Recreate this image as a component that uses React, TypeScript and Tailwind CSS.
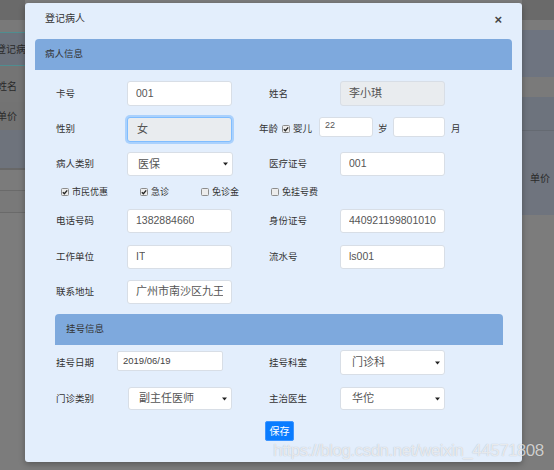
import React from "react";

const FONT = { fontFamily: '"Liberation Sans", "Noto Sans CJK SC", sans-serif' };

function Arrow() {
  return (
    <svg width="5" height="4" viewBox="0 0 5 4" className="shrink-0">
      <polygon points="0,0.5 5,0.5 2.5,3.5" fill="#222" />
    </svg>
  );
}

function Check({ checked }: { checked?: boolean }) {
  return (
    <svg width="8" height="8" viewBox="0 0 8 8" className="shrink-0">
      <rect x="0.5" y="0.5" width="7" height="7" rx="1" fill="#ececec" stroke="#8c8c8c" />
      {checked && <path d="M1.8 4.2 L3.4 5.7 L6.2 2.3" fill="none" stroke="#222" strokeWidth="1.3" />}
    </svg>
  );
}

function Label({ children, w = "w-[71px]" }: { children: React.ReactNode; w?: string }) {
  return <div className={`${w} shrink-0 text-[9.5px] leading-[12px] text-[#333]`}>{children}</div>;
}

function Input({ value, disabled, w = "w-[105px]", h = "h-[25px]", fs = "text-[10.5px]" }: { value: string; disabled?: boolean; w?: string; h?: string; fs?: string }) {
  return (
    <div
      className={`${w} ${h} ${fs} shrink-0 overflow-hidden whitespace-nowrap rounded-[3px] border border-[#d8dee6] px-[8px] flex items-center text-[#555] ${
        disabled ? "bg-[#e9ecef]" : "bg-white"
      }`}
    >
      <span className="overflow-hidden whitespace-nowrap">{value}</span>
    </div>
  );
}

function Select({ value, w = "w-[105px]", h = "h-[25px]", pl = "pl-[10px]" }: { value: string; w?: string; h?: string; pl?: string }) {
  return (
    <div
      className={`${w} ${h} ${pl} shrink-0 rounded-[3px] border border-[#d8dee6] bg-white pr-[4px] flex items-center justify-between text-[11px] text-[#555]`}
    >
      <span>{value}</span>
      <Arrow />
    </div>
  );
}

export default function App() {
  return (
    <div className="relative w-[554px] h-[470px] overflow-hidden bg-[#7c7c7c]" style={FONT}>
      {/* backdrop page */}
      <div className="absolute inset-0 flex">
        <div className="w-[25px] flex flex-col overflow-hidden">
          <div className="h-[20px] bg-[#6a6a6a]" />
          <div className="h-[12px] bg-[#797979]" />
          <div className="h-[34px] bg-[#6c727c] border-y border-[#4f8d90] flex items-center">
            <span className="ml-[-4px] whitespace-nowrap text-[10px] text-[#2a2a2a]">登记病人</span>
          </div>
          <div className="h-[36px] bg-[#747474] flex items-end pb-[9px]">
            <span className="ml-[-3px] whitespace-nowrap text-[10px] leading-[12px] text-[#2a2a2a]">姓名</span>
          </div>
          <div className="h-[28px] bg-[#737373] pt-[9px]">
            <span className="ml-[-3px] block whitespace-nowrap text-[10px] leading-[12px] text-[#2a2a2a]">单价</span>
          </div>
          <div className="h-[38px] bg-[#6e737c]" />
          <div className="h-[2px] bg-[#686868]" />
          <div className="h-[20px] bg-[#7b7b7b]" />
          <div className="h-[1px] bg-[#6a6a6a]" />
          <div className="h-[21px] bg-[#797979]" />
          <div className="h-[1px] bg-[#6a6a6a]" />
          <div className="flex-1 bg-[#7c7c7c]" />
        </div>
        <div className="flex-1" />
        <div className="w-[32px] flex flex-col overflow-hidden">
          <div className="h-[20px] bg-[#6a6a6a]" />
          <div className="h-[10px] bg-[#7b7b7b]" />
          <div className="h-[47px] bg-[#6e7480]" />
          <div className="h-[20px] bg-[#7a7a7a]" />
          <div className="h-[33px] bg-[#6d737d]" />
          <div className="h-[1px] bg-[#656a72]" />
          <div className="h-[84px] bg-[#6f747e] pt-[42px] pl-[8px]">
            <span className="block whitespace-nowrap text-[10px] leading-[12px] text-[#2a2a2a]">单价</span>
          </div>
          <div className="flex-1 bg-[#7c7c7c]" />
        </div>
      </div>

      {/* modal */}
      <div className="absolute left-[25px] top-[3px] w-[497px] h-[459px] rounded-[3px] bg-[#e3eefc] flex flex-col shadow-[0_2px_6px_rgba(0,0,0,0.3)]">
        <div className="h-[36px] shrink-0 flex justify-between items-start pt-[9px] pl-[20px] pr-[20px]">
          <span className="text-[10px] leading-[14px] text-[#333]">登记病人</span>
          <span className="text-[13px] leading-[14px] font-bold text-[#444] mt-[1px]">×</span>
        </div>

        <div className="mx-[10px] h-[31px] shrink-0 rounded-t-[4px] bg-[#7ea9dd] pl-[10px] flex items-center text-[9.5px] text-[#333]">
          病人信息
        </div>

        <div className="mt-[6px] flex flex-col">
          {/* row 1 */}
          <div className="h-[35px] pl-[31px] flex items-center">
            <Label>卡号</Label>
            <Input value="001" />
            <div className="w-[37px] shrink-0" />
            <Label>姓名</Label>
            <Input value="李小琪" disabled fs="text-[11px]" />
          </div>
          {/* row 2 */}
          <div className="h-[36px] pl-[31px] flex items-center">
            <Label>性别</Label>
            <div className="w-[105px] h-[25px] shrink-0 rounded-[3px] border border-[#80bdff] bg-[#e9ecef] pl-[9px] flex items-center text-[11px] text-[#555] shadow-[0_0_0_2px_rgba(0,123,255,0.25)]">
              女
            </div>
            <div className="w-[27px] shrink-0" />
            <div className="text-[9.5px] leading-[12px] text-[#333] w-[23px] shrink-0">年龄</div>
            <Check checked />
            <div className="ml-[3px] w-[26px] shrink-0 text-[9.5px] leading-[12px] text-[#333]">婴儿</div>
            <div className="mb-[5px] w-[54px] h-[20px] shrink-0 rounded-[3px] border border-[#d8dee6] bg-white pl-[5px] pt-[2px] text-[9px] leading-[10px] text-[#555]">
              22
            </div>
            <div className="ml-[5px] w-[15px] shrink-0 text-[9.5px] leading-[12px] text-[#333]">岁</div>
            <div className="mb-[5px] w-[52px] h-[20px] shrink-0 rounded-[3px] border border-[#d8dee6] bg-white" />
            <div className="ml-[6px] text-[9.5px] leading-[12px] text-[#333]">月</div>
          </div>
          {/* row 3 */}
          <div className="h-[34px] pl-[31px] flex items-center">
            <Label>病人类别</Label>
            <Select value="医保" w="w-[106px]" h="h-[24px]" />
            <div className="w-[36px] shrink-0" />
            <Label>医疗证号</Label>
            <Input value="001" h="h-[24px]" />
          </div>
          {/* row 4 checkboxes */}
          <div className="h-[22px] pl-[36px] flex items-center gap-[32px] text-[9px] leading-[12px] text-[#333]">
            <div className="flex items-center gap-[3px]">
              <Check checked />
              <span>市民优惠</span>
            </div>
            <div className="flex items-center gap-[3px]">
              <Check checked />
              <span>急诊</span>
            </div>
            <div className="flex items-center gap-[3px]">
              <Check />
              <span>免诊金</span>
            </div>
            <div className="flex items-center gap-[3px]">
              <Check />
              <span>免挂号费</span>
            </div>
          </div>
          {/* row 5 */}
          <div className="h-[36px] pl-[31px] flex items-center">
            <Label>电话号码</Label>
            <Input value="1382884660" h="h-[24px]" />
            <div className="w-[37px] shrink-0" />
            <Label>身份证号</Label>
            <Input value="440921199801010987" h="h-[24px]" />
          </div>
          {/* row 6 */}
          <div className="h-[35px] pl-[31px] flex items-center">
            <Label>工作单位</Label>
            <Input value="IT" h="h-[24px]" />
            <div className="w-[37px] shrink-0" />
            <Label>流水号</Label>
            <Input value="ls001" h="h-[24px]" />
          </div>
          {/* row 7 */}
          <div className="h-[35px] pl-[31px] flex items-center">
            <Label>联系地址</Label>
            <Input value="广州市南沙区九王庙" h="h-[24px]" fs="text-[11px]" />
          </div>
        </div>

        <div className="mt-[5px] ml-[30px] w-[448px] h-[31px] shrink-0 rounded-t-[4px] bg-[#7ea9dd] pl-[11px] flex items-center text-[9.5px] text-[#333]">
          挂号信息
        </div>

        <div className="flex flex-col">
          {/* row 8 */}
          <div className="h-[35px] pl-[31px] flex items-center">
            <Label w="w-[61px]">挂号日期</Label>
            <div className="mb-[3px] w-[106px] h-[20px] shrink-0 rounded-[2px] border border-[#d8dee6] bg-white pl-[5px] flex items-center text-[9.5px] text-[#444]">
              2019/06/19
            </div>
            <div className="w-[46px] shrink-0" />
            <Label>挂号科室</Label>
            <Select value="门诊科" pl="pl-[11px]" />
          </div>
          {/* row 9 */}
          <div className="h-[37px] pl-[31px] flex items-center">
            <Label w="w-[72px]">门诊类别</Label>
            <Select value="副主任医师" w="w-[104px]" h="h-[23px]" />
            <div className="w-[37px] shrink-0" />
            <Label>主治医生</Label>
            <Select value="华佗" h="h-[23px]" pl="pl-[11px]" />
          </div>
          <div className="mt-[4px] pl-[240px] flex">
            <div className="w-[29px] h-[20px] rounded-[2px] bg-[#0a7cff] border border-[#3d95ff] flex items-center justify-center text-[10px] text-white">
              保存
            </div>
          </div>
        </div>
      </div>

      {/* watermark */}
      <div className="absolute left-[273px] top-[441px] whitespace-nowrap text-[17px] leading-[20px] tracking-[-0.5px] text-white/70 [text-shadow:0_0_1px_rgba(0,0,0,0.25)]">
        https://blog.csdn.net/weixin_44571808
      </div>
    </div>
  );
}
